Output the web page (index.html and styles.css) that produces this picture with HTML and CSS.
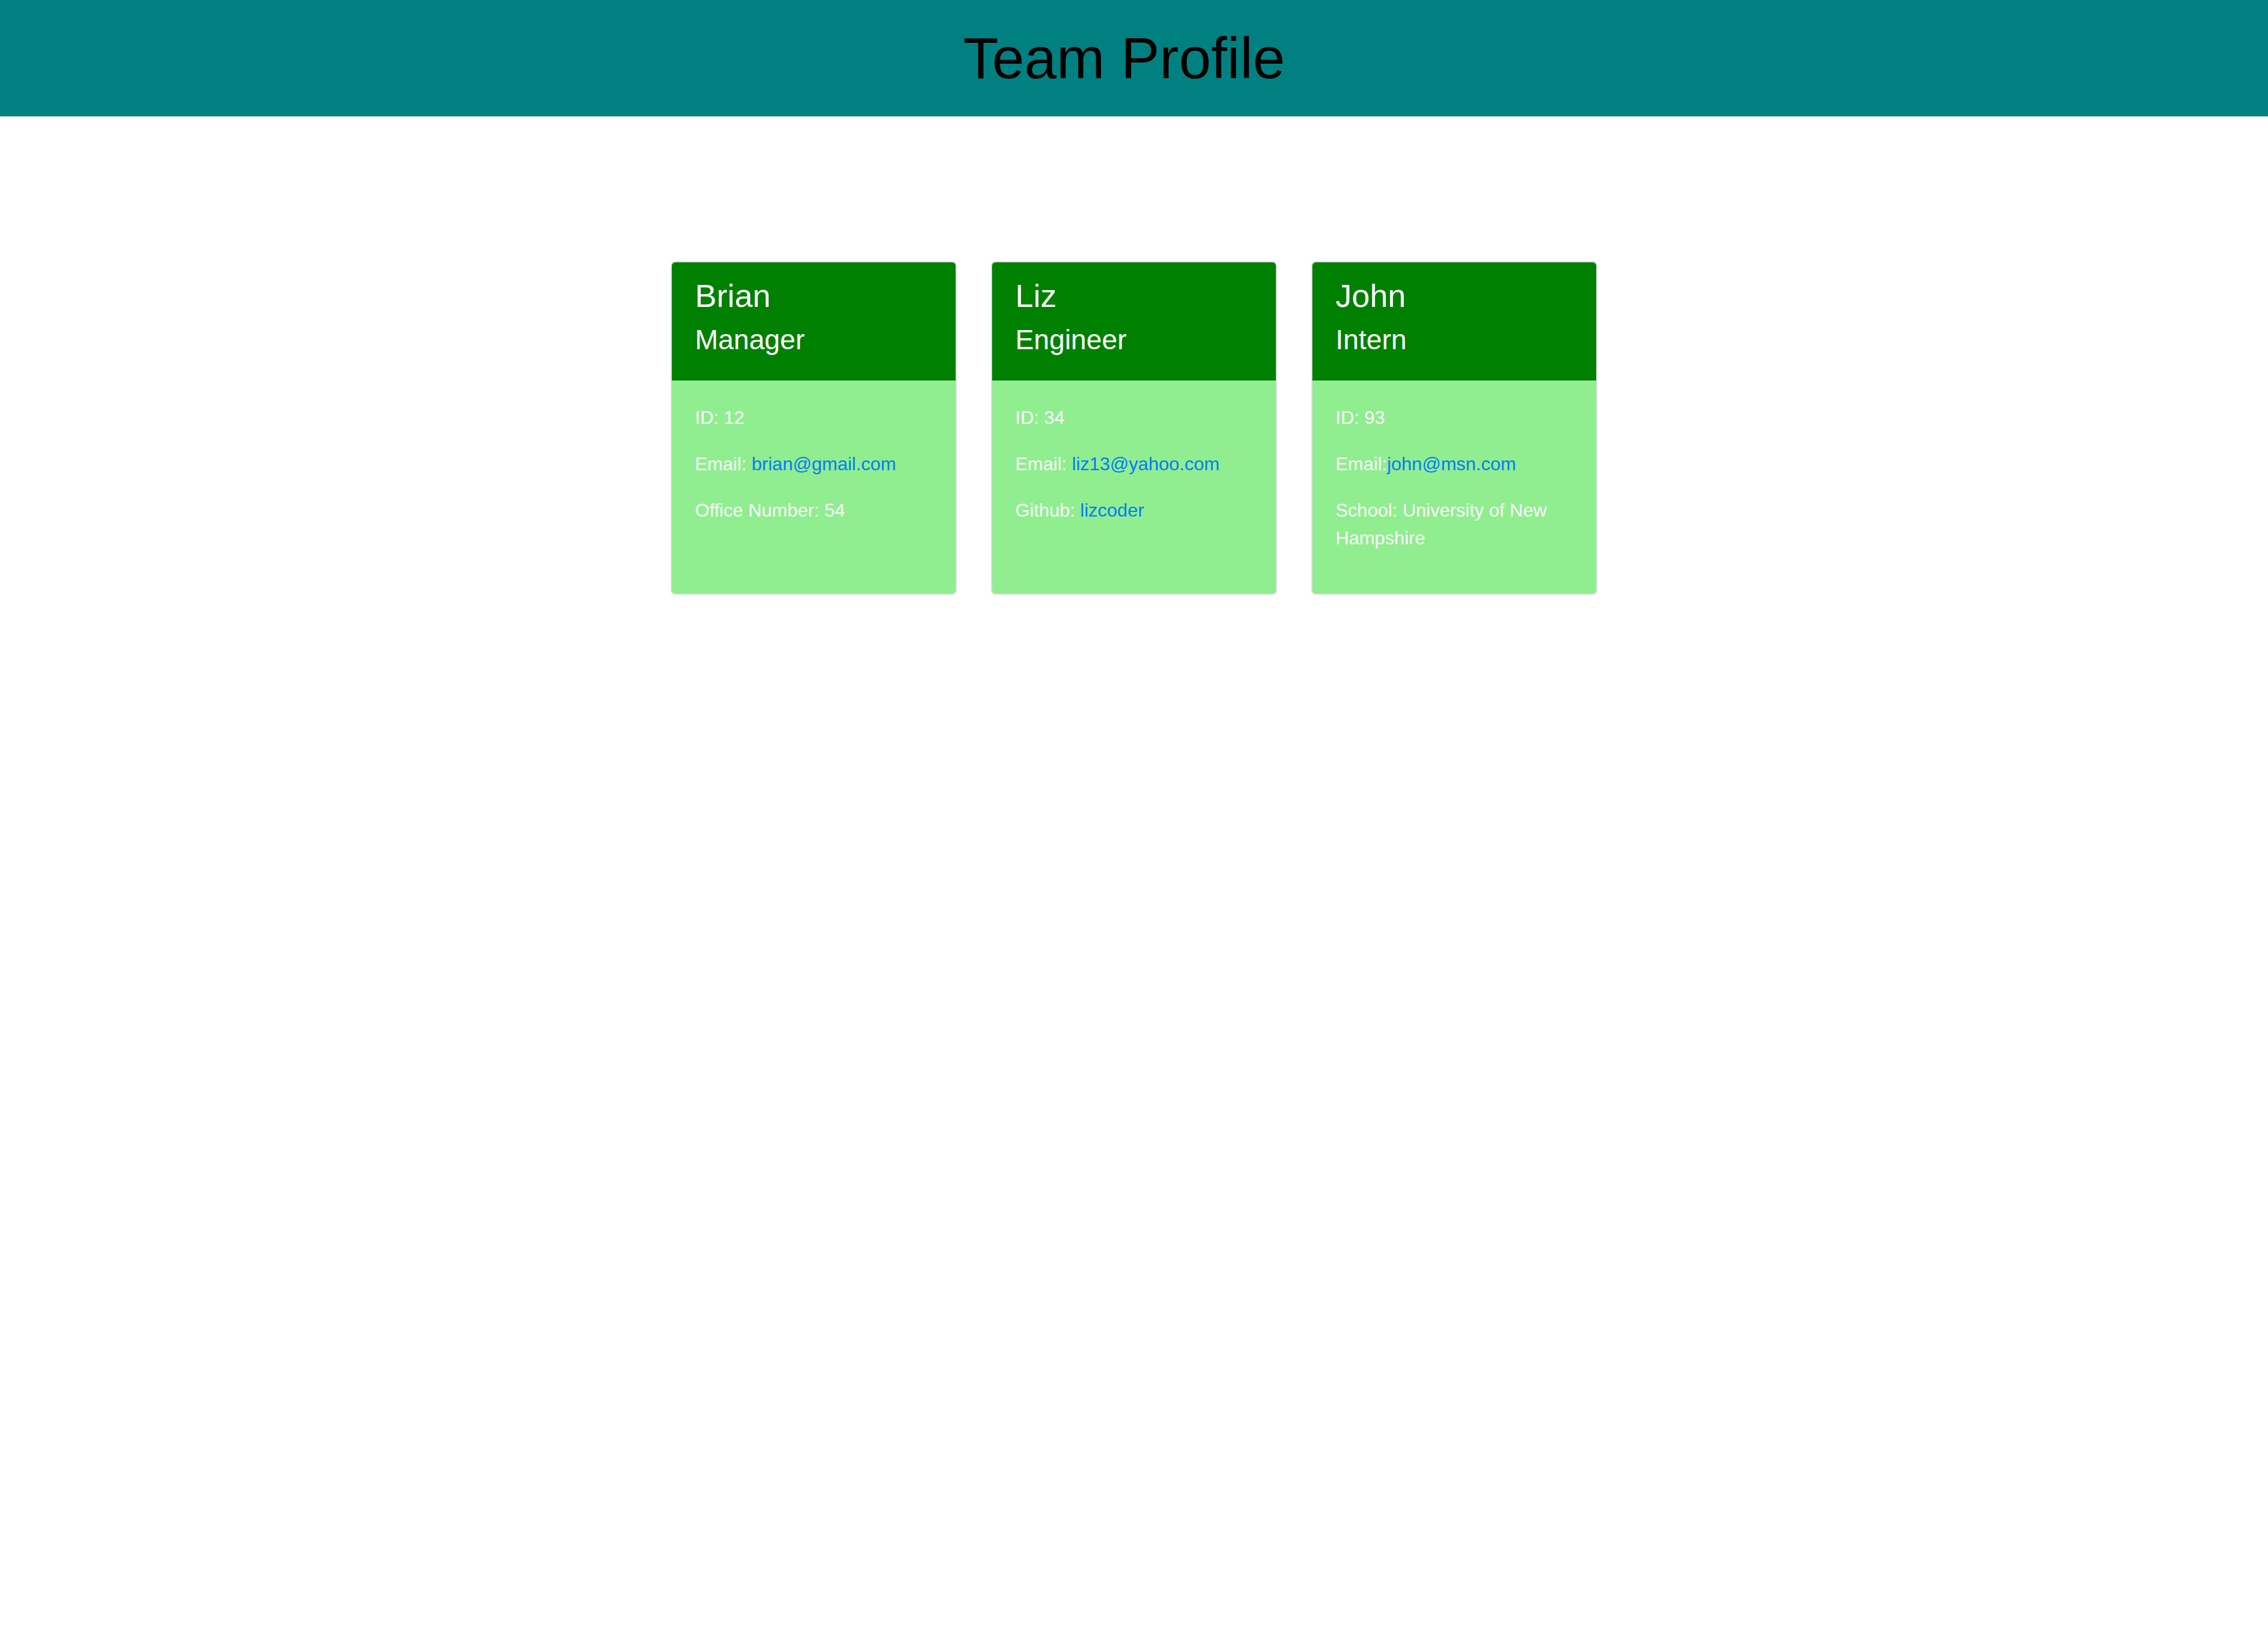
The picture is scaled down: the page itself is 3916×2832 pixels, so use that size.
FILE: index.html
```html
<!DOCTYPE html>
<html lang="en">
<head>
<meta charset="UTF-8">
<title>Team Profile</title>
<link rel="stylesheet" href="styles.css">
</head>
<body>
<header class="top-bar">
  <h1 class="page-title">Team Profile</h1>
</header>
<main class="team">
  <div class="card">
    <div class="card-header">
      <h3 class="card-name">Brian</h3>
      <h4 class="card-role">Manager</h4>
    </div>
    <div class="card-body">
      <p>ID: 12</p>
      <p>Email: <a href="#">brian@gmail.com</a></p>
      <p>Office Number: 54</p>
    </div>
  </div>
  <div class="card">
    <div class="card-header">
      <h3 class="card-name">Liz</h3>
      <h4 class="card-role">Engineer</h4>
    </div>
    <div class="card-body">
      <p>ID: 34</p>
      <p>Email: <a href="#">liz13@yahoo.com</a></p>
      <p>Github: <a href="#">lizcoder</a></p>
    </div>
  </div>
  <div class="card">
    <div class="card-header">
      <h3 class="card-name">John</h3>
      <h4 class="card-role">Intern</h4>
    </div>
    <div class="card-body">
      <p>ID: 93</p>
      <p>Email:<a href="#">john@msn.com</a></p>
      <p>School: University of New Hampshire</p>
    </div>
  </div>
</main>
</body>
</html>
```
FILE: styles.css
```css
* {
  box-sizing: border-box;
}

body {
  margin: 0;
  background: #ffffff;
  font-family: "Liberation Sans", Arial, sans-serif;
  font-size: 32px;
  line-height: 48px;
  color: #212529;
}

.top-bar {
  background: #008080;
  height: 201px;
  padding-top: 40px;
  display: flex;
  justify-content: center;
}

.page-title {
  margin: 0;
  padding-right: 34px;
  font-size: 100px;
  line-height: 120px;
  font-weight: 400;
  color: #000000;
}

.team {
  display: flex;
  justify-content: center;
  align-items: stretch;
  gap: 59px;
  margin-top: 250px;
}

.card {
  width: 494px;
  display: flex;
  flex-direction: column;
  border: 2px solid rgba(0, 0, 0, 0.125);
  border-radius: 8px;
  overflow: hidden;
  background: #90ee90;
  background-clip: padding-box;
}

.card-header {
  background: #008000;
  color: #ffffff;
  padding: 24px 40px 39px;
  border-bottom: 2px solid rgba(0, 0, 0, 0.125);
}

.card-name {
  margin: 0 0 14px;
  font-size: 56px;
  line-height: 67px;
  font-weight: 400;
}

.card-role {
  margin: 0;
  font-size: 48px;
  line-height: 58px;
  font-weight: 400;
}

.card-body {
  flex: 1 1 auto;
  padding: 40px;
  color: #ffffff;
}

.card-body p {
  margin: 0 0 32px;
}

.card-body a {
  color: #007bff;
  text-decoration: none;
}
```
